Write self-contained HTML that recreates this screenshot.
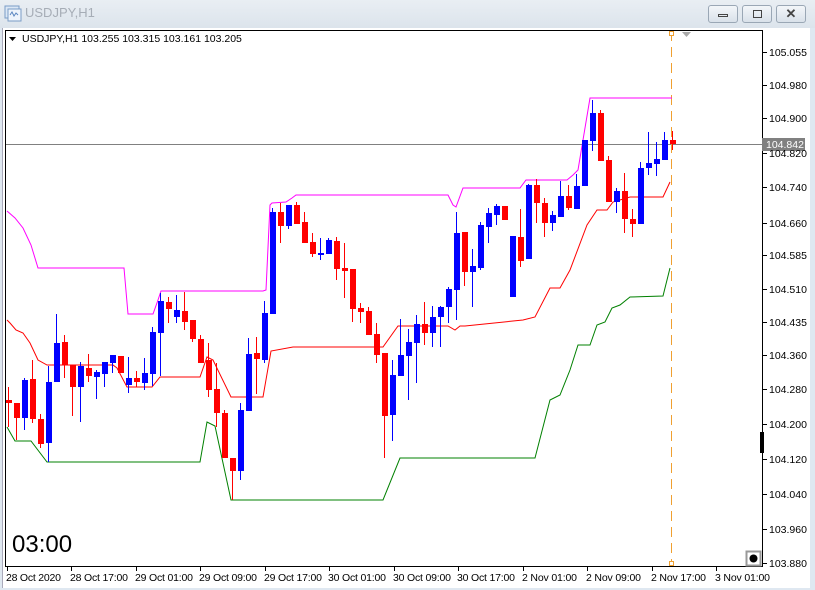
<!DOCTYPE html>
<html><head><meta charset="utf-8">
<style>
html,body{margin:0;padding:0;width:815px;height:590px;overflow:hidden;background:#dfe8f1;font-family:"Liberation Sans",sans-serif}
.btn{position:absolute;top:5px;width:30px;height:18px;border:1px solid #9aa7b5;border-radius:3px;background:linear-gradient(#f3f6f9,#d9e1ea);box-sizing:border-box}
</style></head><body>
<div style="position:absolute;left:0;top:0;width:815px;height:28px;background:linear-gradient(#e9eef3,#dce4ec)"></div>
<svg style="position:absolute;left:4px;top:5px" width="18" height="17" viewBox="0 0 18 17"><rect x="1" y="1" width="14" height="12" fill="#dbe7f5" stroke="#7a9cc6"/><rect x="4" y="4" width="13" height="12" fill="#eef4fb" stroke="#7a9cc6"/><path d="M6 10l2-3 2 4 2-3 2 2" stroke="#5a86c0" fill="none"/></svg>
<div style="position:absolute;left:25px;top:5px;font-size:13px;color:#a6adb6">USDJPY,H1</div>
<div class="btn" style="left:708px"><div style="position:absolute;left:9px;top:8px;width:10px;height:3px;border:1px solid #444;box-sizing:border-box"></div></div>
<div class="btn" style="left:742px"><div style="position:absolute;left:10px;top:4px;width:9px;height:8px;border:1px solid #444;box-sizing:border-box"></div></div>
<div class="btn" style="left:776px;font-size:13px;font-weight:bold;text-align:center;line-height:16px;color:#444">✕</div>
<div style="position:absolute;left:2px;top:28px;width:807px;height:560px;background:#fff;border-left:1px solid #aab"></div>
<svg id="s" style="position:absolute;left:0;top:0" width="815" height="590" font-family="Liberation Sans, sans-serif">
<rect x="5.5" y="30.5" width="757" height="536" fill="none" stroke="#000"/>
<line x1="6" y1="144.5" x2="762" y2="144.5" stroke="#808080"/>
<line x1="671.5" y1="31" x2="671.5" y2="566" stroke="#f0a030" stroke-dasharray="10,6"/>
<rect x="669.5" y="31.5" width="4" height="4" fill="#fff" stroke="#f0a030"/>
<rect x="669.5" y="561.5" width="4" height="4" fill="#fff" stroke="#f0a030"/>
<path d="M682 32h9l-4.5 5z" fill="#aaa"/>
<path d="M9 37h7l-3.5 4z" fill="#000"/>
<text x="22" y="42" font-size="10.5" fill="#000">USDJPY,H1  103.255 103.315 103.161 103.205</text>
<polyline fill="none" stroke="#ff00ff" points="7,211 15,218 23,228 31,245 38,268 124,268 128,314 153,314 158,300 161,291 263,291 266,290 270,205 272,203 286,202 292,198 296,195 448,195 453,205 456,207 463,188 520,188 526,180 567,180 573,175 578,170 590,98 672,98"/>
<polyline fill="none" stroke="#ff0000" points="7,320 10,323 16,330 23,333 30,343 38,360 47,365 113,365 117,368 127,387 152,387 160,377 200,377 207,357 213,360 231,397 263,397 271,351 293,347 383,347 398,326 448,326 455,330 460,326 465,326 523,320 535,317 550,288 560,288 570,270 587,225 597,210 607,210 613,202 630,197 663,197 670,182"/>
<polyline fill="none" stroke="#008000" points="7,427 15,441 31,441 47,462 200,462 207,422 215,426 231,500 383,500 400,458 535,458 550,400 560,395 570,370 578,345 590,345 597,325 605,322 612,308 620,305 630,297 663,296 670,268"/>
<g id="c"></g>
<rect x="762" y="138" width="43" height="13" fill="#808080"/>
<text x="766" y="148" font-size="10.5" fill="#fff">104.842</text>
<rect x="760" y="432" width="4" height="21" fill="#000"/>
<rect x="746.5" y="551.5" width="14" height="14" fill="#fff" stroke="#999" stroke-width="2"/>
<circle cx="753.5" cy="558.5" r="4" fill="#000"/>
<text x="12" y="552" font-size="24" fill="#000">03:00</text>
<g id="ax" font-size="10.5" fill="#000"></g>
</svg>
<script>
var d=[[8,400,403,387,427,'r'],[16,403,418,403,440,'r'],[24,418,380,378,430,'b'],[32,379,419,360,423,'r'],[40,419,444,414,448,'r'],[48,443,382,366,462,'b'],[56,382,343,314,382,'b'],[64,342,365,335,378,'r'],[72,365,387,365,416,'r'],[80,387,366,362,422,'b'],[88,368,376,354,382,'r'],[96,377,372,370,399,'b'],[104,374,362,362,387,'b'],[112,363,355,355,373,'b'],[120,356,373,356,373,'r'],[128,385,378,357,393,'b'],[136,378,382,371,387,'r'],[144,383,373,358,390,'b'],[152,374,332,327,386,'b'],[160,333,301,293,376,'b'],[168,302,309,297,323,'r'],[176,317,310,295,323,'b'],[184,311,322,292,330,'r'],[192,320,339,320,342,'r'],[200,339,363,335,363,'r'],[208,360,390,343,397,'r'],[216,389,413,363,427,'r'],[224,413,458,410,458,'r'],[232,458,471,458,500,'r'],[240,471,410,403,480,'b'],[248,411,354,338,411,'b'],[256,353,359,337,394,'r'],[264,360,313,301,363,'b'],[272,314,212,208,314,'b'],[280,212,226,203,243,'r'],[288,226,205,205,229,'b'],[296,205,224,202,224,'r'],[304,222,243,212,243,'r'],[312,242,254,233,257,'r'],[320,255,253,238,260,'b'],[328,254,240,238,254,'b'],[336,241,269,237,280,'r'],[344,268,271,243,298,'r'],[352,269,309,269,322,'r'],[360,308,312,303,323,'r'],[368,311,335,307,335,'r'],[376,334,355,323,363,'r'],[384,353,416,353,458,'r'],[392,415,375,360,441,'b'],[400,376,355,319,376,'b'],[408,356,342,329,400,'b'],[416,343,324,315,383,'b'],[424,324,333,302,345,'r'],[432,333,317,306,347,'b'],[440,317,307,306,347,'b'],[448,307,289,287,323,'b'],[456,290,233,212,320,'b'],[464,232,272,232,286,'r'],[472,272,266,249,307,'b'],[480,268,225,222,270,'b'],[488,227,213,208,243,'b'],[496,215,206,204,225,'b'],[504,206,220,206,220,'r'],[512,297,236,236,297,'b'],[520,237,261,209,267,'r'],[528,259,185,184,259,'b'],[536,185,203,179,223,'r'],[544,203,223,198,237,'r'],[552,223,215,211,231,'b'],[560,217,196,181,217,'b'],[568,196,208,185,210,'r'],[576,209,186,174,209,'b'],[584,186,140,140,186,'b'],[592,141,113,100,151,'b'],[600,113,161,110,161,'r'],[608,160,202,156,202,'r'],[616,202,191,188,213,'b'],[624,191,219,173,233,'r'],[632,219,224,209,237,'r'],[640,224,168,162,224,'b'],[648,168,163,132,175,'b'],[656,164,159,142,176,'b'],[664,160,140,132,160,'b'],[672,140,144,131,150,'r']];
var h='';d.forEach(function(c){var col=c[5]=='r'?'#ff0000':'#0000ff';var t=Math.min(c[1],c[2]),b=Math.max(c[1],c[2]);if(b-t<2)b=t+2;
h+='<line x1="'+(c[0]+.5)+'" y1="'+c[3]+'" x2="'+(c[0]+.5)+'" y2="'+c[4]+'" stroke="'+col+'"/><rect x="'+(c[0]-2)+'" y="'+t+'" width="6" height="'+(b-t)+'" fill="'+col+'"/>';});
document.getElementById('c').innerHTML=h;
var p=[['105.055',52],['104.980',85],['104.900',118],['104.820',153],['104.740',187],['104.660',223],['104.585',255],['104.510',289],['104.435',322],['104.360',355],['104.280',389],['104.200',424],['104.120',459],['104.040',494],['103.960',529],['103.880',563]];
var a='';p.forEach(function(q){a+='<line x1="763" y1="'+(q[1]+.5)+'" x2="767" y2="'+(q[1]+.5)+'" stroke="#000"/><text x="769" y="'+(q[1]+4)+'">'+q[0]+'</text>';});
var t=['28 Oct 2020','28 Oct 17:00','29 Oct 01:00','29 Oct 09:00','29 Oct 17:00','30 Oct 01:00','30 Oct 09:00','30 Oct 17:00','2 Nov 01:00','2 Nov 09:00','2 Nov 17:00','3 Nov 01:00'];
t.forEach(function(s,i){var x=Math.round(7+i*64.45);a+='<line x1="'+(x+.5)+'" y1="567" x2="'+(x+.5)+'" y2="571" stroke="#000"/><text x="'+(x-1)+'" y="581" textLength="'+(s.length>11?58:s.length>10?55:52)+'">'+s+'</text>';});
document.getElementById('ax').innerHTML=a;
</script>
</body></html>
